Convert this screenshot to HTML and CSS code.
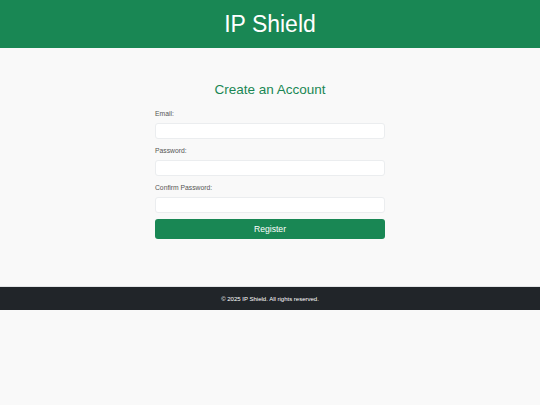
FILE: index.html
```html
<!DOCTYPE html>
<html lang="en">
<head>
  <meta charset="UTF-8">
  <meta name="viewport" content="width=device-width, initial-scale=1">
  <title>IP Shield - Register</title>
  <link rel="stylesheet" href="styles.css">
</head>
<body>

  <!-- ===== Header ===== -->
  <header>
    <h1>IP Shield</h1>
  </header>

  <!-- ===== Register Form ===== -->
  <main class="container">
    <h2>Create an Account</h2>
    <form class="register-form">
      <label for="email">Email:</label>
      <input type="email" id="email" name="email">

      <label for="password">Password:</label>
      <input type="password" id="password" name="password">

      <label for="confirm">Confirm Password:</label>
      <input type="password" id="confirm" name="confirm">

      <button type="submit">Register</button>
    </form>
  </main>

  <!-- ===== Footer ===== -->
  <footer>
    &copy; 2025 IP Shield. All rights reserved.
  </footer>

</body>
</html>
```

FILE: styles.css
```css
/* ===== Basic Reset & Styles ===== */
body {
  margin: 0;
  font-family: 'Liberation Sans', Arial, sans-serif;
  background: #f9f9f9;
  color: #333;
}

/* ===== Header ===== */
header {
  background: #198754;
  color: #fff;
  height: 48px;
  display: flex;
  align-items: center;
  justify-content: center;
}
header h1 {
  margin: 0;
  font-size: 23px;
  font-weight: normal;
}

/* ===== Form ===== */
.container {
  width: 230px;
  margin: 0 auto;
  padding: 34px 0 47px;
}
.container h2 {
  margin: 0 0 11px;
  font-size: 13.5px;
  line-height: 16px;
  font-weight: normal;
  text-align: center;
  color: #198754;
}
.register-form {
  display: flex;
  flex-direction: column;
}
.register-form label {
  font-size: 6.75px;
  line-height: 10px;
  color: #555;
  margin-bottom: 4px;
}
.register-form input {
  box-sizing: border-box;
  height: 16px;
  margin: 0 0 7px;
  padding: 0 5px;
  border: 1px solid #ebedef;
  border-radius: 3px;
  background: #fff;
  font-family: inherit;
  font-size: 7px;
}
.register-form button {
  height: 20px;
  margin-top: -1px;
  background: #198754;
  color: #fff;
  border: none;
  border-radius: 3px;
  font-family: inherit;
  font-size: 8.6px;
  cursor: pointer;
}

/* ===== Footer ===== */
footer {
  background: #212529;
  color: #fff;
  height: 24px;
  line-height: 24px;
  text-align: center;
  font-size: 6px;
  border-top: 1px solid #e2e4e6;
  box-sizing: border-box;
}
```
